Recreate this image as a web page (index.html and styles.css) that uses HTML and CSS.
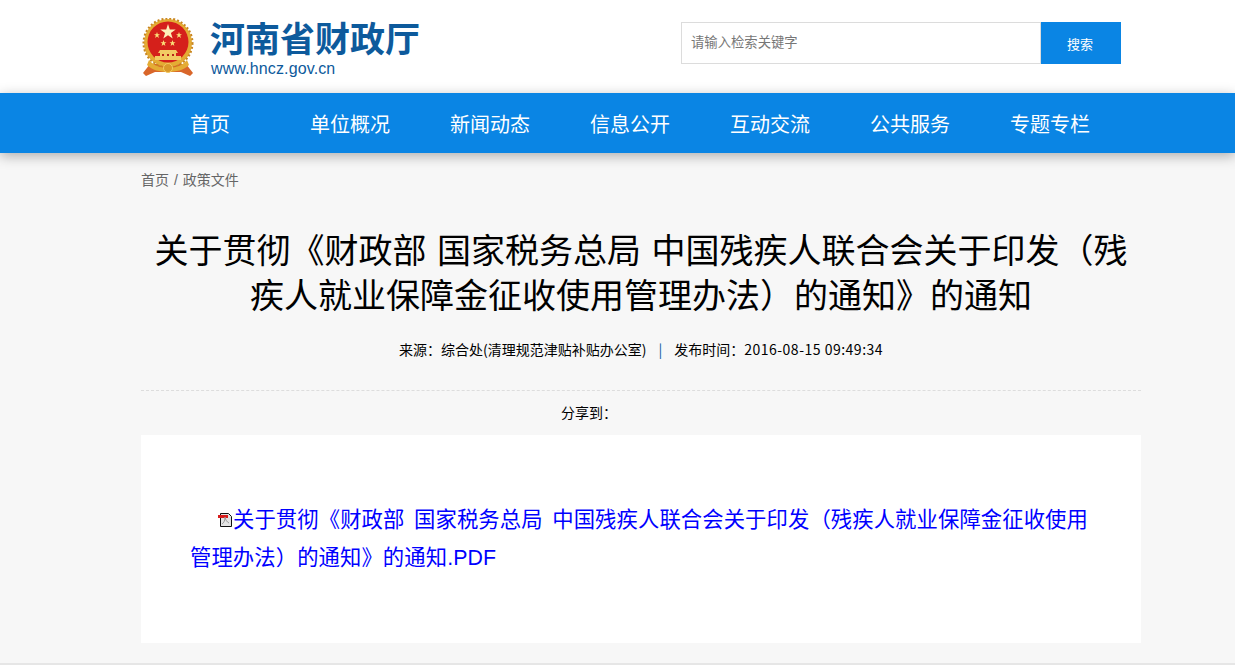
FILE: index.html
```html
<!DOCTYPE html>
<html lang="zh-CN">

<head>
  <meta charset="UTF-8">
  <meta name="viewport" content="width=device-width, initial-scale=1.0">
  <title>河南省财政厅</title>
  <link rel="stylesheet" href="styles.css">
</head>

<body>
  <header class="top">
    <div class="top-inner">
      <a class="logo" href="#">
        <svg class="emblem" width="54" height="60" viewBox="0 0 54 60">
          <path d="M9 46l-7 9 3 3 9-4h26l9 4 3-3-7-9z" fill="#d9662a" />
          <circle cx="27" cy="25" r="24" fill="#e4ac34" />
          <circle cx="27" cy="25" r="24.500" fill="none" stroke="#c9861f" stroke-width="2" stroke-dasharray="2 2" />
          <circle cx="27" cy="24" r="20.500" fill="#d5201b" />
          <path d="M27 6l1.800 5.600h5.900l-4.800 3.400 1.800 5.600-4.700-3.400-4.700 3.400 1.800-5.600-4.800-3.400h5.900z" fill="#fdf0b8" />
          <path d="M16 14l.8 2.200H19l-1.800 1.400.7 2.300-1.900-1.400-1.900 1.400.7-2.300-1.800-1.400h2.200zM38 14l.8 2.200H41l-1.800 1.400.7 2.300-1.900-1.400-1.900 1.400.7-2.300-1.800-1.400h2.200zM22.500 22l.8 2.200h2.200l-1.800 1.400.7 2.300-1.900-1.400-1.900 1.400.7-2.300-1.800-1.400h2.200zM31.500 22l.8 2.200h2.200l-1.800 1.400.7 2.300-1.900-1.400-1.900 1.400.7-2.300-1.800-1.400h2.200z" fill="#fbe27a" />
          <path d="M19 32h16l2 3h-2v3h5v4H14v-4h5v-3h-2z" fill="#f2cb63" />
          <path d="M21 36h2v2h-2zM26 36h2v2h-2zM31 36h2v2h-2z" fill="#b5261a" />
          <path d="M8 42c5 6 12 8 19 8s14-2 19-8l2 5c-5 5-13 7-21 7S11 52 6 47z" fill="#e4ac34" />
          <circle cx="27" cy="50" r="4.500" fill="#d9992a" stroke="#f2cb63" />
        </svg>
        <div class="logo-text">
          <strong>河南省财政厅</strong>
          <span>www.hncz.gov.cn</span>
        </div>
      </a>
      <form class="search">
        <input class="search-input" type="text" placeholder="请输入检索关键字">
        <button class="search-btn" type="button">搜索</button>
      </form>
    </div>
  </header>

  <nav class="nav">
    <ul class="nav-list">
      <li><a href="#">首页</a></li>
      <li><a href="#">单位概况</a></li>
      <li><a href="#">新闻动态</a></li>
      <li><a href="#">信息公开</a></li>
      <li><a href="#">互动交流</a></li>
      <li><a href="#">公共服务</a></li>
      <li><a href="#">专题专栏</a></li>
    </ul>
  </nav>

  <main class="wrap">
    <div class="crumb"><a href="#">首页</a> / <a href="#">政策文件</a></div>
    <h1 class="title">关于贯彻《财政部 国家税务总局 中国残疾人联合会关于印发（残疾人就业保障金征收使用管理办法）的通知》的通知</h1>
    <p class="info">来源：综合处(清理规范津贴补贴办公室)<span class="sep">|</span>发布时间：<span class="date">2016-08-15 09:49:34</span></p>
    <div class="share">分享到：</div>
    <article class="article">
      <p>
        <svg class="pdf" width="16" height="16" viewBox="0 0 16 16">
          <path d="M3.500 1.500h8l3 3v10h-11z" fill="#e4e4e4" stroke="#111" />
          <path d="M1 3h10v3H1z" fill="#d81c1c" />
          <path d="M5 12c2-1 3-4 3-7 .5 3 2 5 4 6" fill="none" stroke="#999" />
        </svg><a class="doc-link" href="#">关于贯彻《财政部 国家税务总局 中国残疾人联合会关于印发（残疾人就业保障金征收使用管理办法）的通知》的通知.PDF</a>
      </p>
    </article>
  </main>

  <footer class="foot"></footer>
</body>

</html>
```

FILE: styles.css
```css
* {
  margin: 0;
  padding: 0;
  box-sizing: border-box;
}

body {
  background-color: #f7f7f7;
  color: #000;
  font-family: "Liberation Sans", "Noto Sans CJK SC", sans-serif;
  font-size: 14px;
}

a {
  text-decoration: none;
  color: inherit;
}

.wrap {
  width: 1000px;
  margin-left: 141px;
}

.top {
  height: 93px;
  background-color: #fff;
}

.top-inner {
  display: flex;
  justify-content: space-between;
  align-items: flex-start;
  width: 1000px;
  margin-left: 141px;
}

.logo {
  display: flex;
  align-items: flex-start;
  padding-top: 18px;
}

.emblem {
  display: block;
}

.logo-text {
  display: flex;
  flex-direction: column;
  margin-left: 15px;
}

.logo-text strong {
  padding-top: 2px;
  font-size: 35px;
  line-height: 40px;
  color: #0d5a9c;
  font-weight: 700;
}

.logo-text span {
  margin-left: 1px;
  font-size: 16px;
  line-height: 18px;
  letter-spacing: 0.13px;
  color: #0d5a9c;
}

.search {
  display: flex;
  margin-top: 22px;
  margin-right: 20px;
}

.search-input {
  width: 360px;
  height: 42px;
  padding: 0 9px 2px;
  border: 1px solid #dcdcdc;
  outline: none;
  font-family: inherit;
  font-size: 13.330px;
}

.search-input::placeholder {
  color: #777;
}

.search-btn {
  width: 80px;
  height: 42px;
  padding-right: 2px;
  border: none;
  background-color: #0a85e4;
  color: #fff;
  font-family: inherit;
  font-size: 13px;
}

.nav {
  height: 60px;
  background-color: #0a85e4;
  box-shadow: 0 3px 12px rgba(0, 0, 0, 0.3);
}

.nav-list {
  display: flex;
  width: 980px;
  margin-left: 140px;
  list-style: none;
}

.nav-list li {
  width: 140px;
  text-align: center;
  line-height: 64px;
  font-size: 20px;
  color: #fff;
}

.crumb {
  padding-top: 18px;
  line-height: 18px;
  font-size: 14px;
  word-spacing: 1px;
  color: #666;
}

.title {
  margin-top: 40px;
  text-align: center;
  font-size: 34px;
  line-height: 45px;
  font-weight: 400;
  word-spacing: 1px;
}

.info {
  margin-top: 20px;
  padding-bottom: 31px;
  border-bottom: 1px dashed #ddd;
  text-align: center;
  font-family: "Noto Sans CJK SC", sans-serif;
  font-size: 14px;
  line-height: 20px;
}

.sep {
  margin: 0 12px;
  color: #0d5a9c;
}

.date {
  letter-spacing: 0.5px;
}

.share {
  padding-left: 420px;
  line-height: 44px;
  font-size: 14px;
}

.article {
  height: 208px;
  padding: 66px 44px 0 49px;
  background-color: #fff;
  font-size: 21.330px;
  line-height: 38px;
  word-spacing: 3.600px;
  letter-spacing: 0.1px;
}

.article p {
  text-indent: 27px;
}

.doc-link {
  color: #00f;
}

.pdf {
  vertical-align: -1px;
}

.foot {
  height: 2px;
  margin-top: 20px;
  background-color: #e6e6e6;
}
```
